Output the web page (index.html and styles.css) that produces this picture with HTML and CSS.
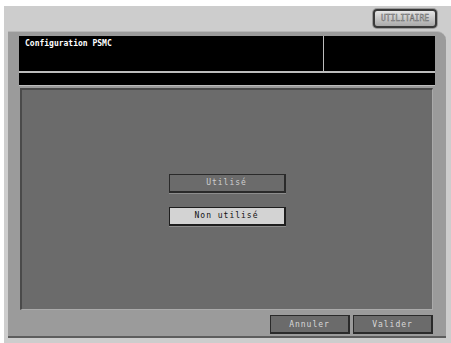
FILE: index.html
```html
<!DOCTYPE html>
<html lang="fr">
<head>
  <meta charset="UTF-8">
  <title>Configuration PSMC</title>
  <link rel="stylesheet" href="styles.css">
</head>
<body>
  <div class="screen">
    <div class="top-bar">
      <button class="utility-btn">UTILITAIRE</button>
    </div>

    <div class="panel">
      <!-- Title area -->
      <div class="header">
        <div class="title">Configuration PSMC</div>
        <div class="header-side"></div>
      </div>
      <div class="message-strip"></div>

      <!-- Choices -->
      <div class="content">
        <button class="choice">Utilisé</button>
        <button class="choice selected">Non utilisé</button>
      </div>

      <div class="actions">
        <button class="action">Annuler</button>
        <button class="action">Valider</button>
      </div>
    </div>
  </div>
</body>
</html>
```

FILE: styles.css
```css
body {
  margin: 0;
  background: #ffffff;
  font-family: "DejaVu Sans Mono", "Liberation Mono", monospace;
}

.screen {
  margin: 6px 0 0 4px;
  height: 337px;
  background: #cdcdcd;
  display: flex;
  flex-direction: column;
}

.top-bar {
  height: 25px;
  display: flex;
  justify-content: flex-end;
  align-items: flex-start;
  padding-right: 14px;
}

.utility-btn {
  margin-top: 3px;
  width: 64px;
  height: 19px;
  border: 2px solid #3a3a3a;
  border-radius: 4px;
  background: linear-gradient(#e6e6e6, #a9a9a9);
  box-shadow: 0 0 0 1px #9a9a9a;
  font-family: inherit;
  font-size: 8px;
  color: #e0e0e0;
  -webkit-text-stroke: 0.5px #6a6a6a;
  padding: 0;
}

/* Main grey panel */
.panel {
  width: 438px;
  height: 307px;
  margin-left: 4px;
  background: #9b9b9b;
  border-top: 1px solid #b8b8b8;
  border-radius: 0 9px 0 0;
  box-shadow: inset 0 -2px 0 #5d5d5d;
  padding: 4px 11px 0 11px;
  box-sizing: border-box;
  display: flex;
  flex-direction: column;
}

.header {
  height: 35px;
  background: #000;
  display: flex;
  border-bottom: 2px solid #bdbdbd;
}

.title {
  width: 305px;
  border-right: 1px solid #bdbdbd;
  color: #fff;
  font-size: 8px;
  font-weight: bold;
  padding: 3px 0 0 6px;
  box-sizing: border-box;
}

.header-side {
  flex: 1;
}

.message-strip {
  height: 12px;
  background: #000;
  border-bottom: 1px solid #bdbdbd;
}

.content {
  margin: 2px 2px 0 1px;
  height: 222px;
  background: #6b6b6b;
  border-top: 2px solid #4a4a4a;
  border-left: 2px solid #4a4a4a;
  border-right: 1px solid #aaaaaa;
  border-bottom: 1px solid #aaaaaa;
  box-sizing: border-box;
  display: flex;
  flex-direction: column;
  align-items: center;
  justify-content: center;
  gap: 14px;
}

.choice {
  width: 117px;
  height: 19px;
  padding: 0;
  font-family: inherit;
  font-size: 8px;
  letter-spacing: 1px;
  background: #6b6b6b;
  color: #cfcfcf;
  border: 1px solid #2a2a2a;
  border-bottom-width: 2px;
  border-right-width: 2px;
  box-shadow: 0 1px 0 #8d8d8d;
}

.choice.selected {
  background: #d3d3d3;
  color: #111;
  border-color: #1e1e1e;
}

.actions {
  display: flex;
  justify-content: flex-end;
  gap: 3px;
  padding: 5px 2px 0 0;
}

.action {
  width: 80px;
  height: 19px;
  padding: 0;
  font-family: inherit;
  font-size: 8px;
  letter-spacing: 1px;
  background: #6b6b6b;
  color: #d8d8d8;
  border: 1px solid #2a2a2a;
  border-right-width: 2px;
  border-bottom-width: 2px;
}
```
